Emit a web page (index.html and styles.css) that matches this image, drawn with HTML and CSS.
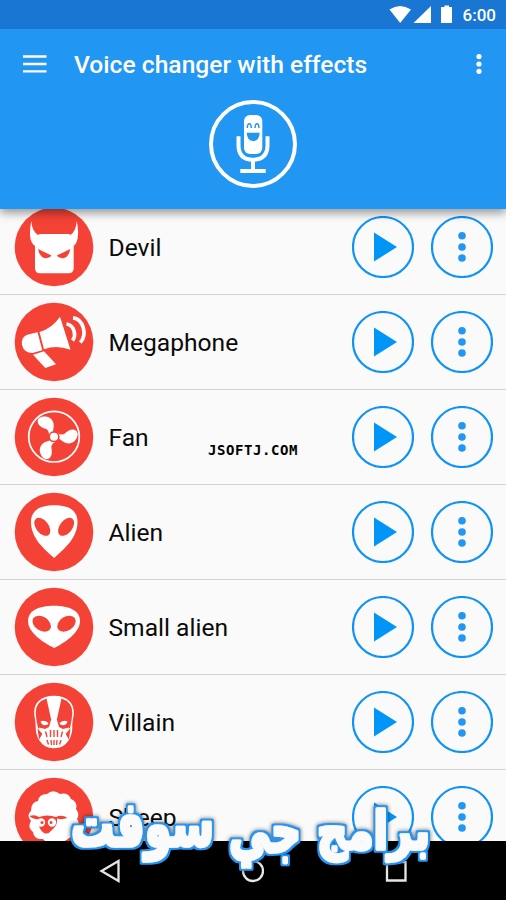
FILE: index.html
```html
<!DOCTYPE html>
<html lang="en">
<head>
<meta charset="utf-8">
<title>Voice changer with effects</title>
<link rel="stylesheet" href="styles.css">
</head>
<body>
<svg class="defs" width="0" height="0" aria-hidden="true">
  <symbol id="play" viewBox="0 0 62 62"><circle class="ring" cx="31" cy="31" r="30"/><path class="solid" d="M22 16.5L45 31L22 45.500Z"/></symbol>
  <symbol id="more" viewBox="0 0 62 62"><circle class="ring" cx="31" cy="31" r="30"/><circle class="dot" cx="31" cy="19.800" r="3.800"/><circle class="dot" cx="31" cy="31" r="3.800"/><circle class="dot" cx="31" cy="42" r="3.800"/></symbol>
  <symbol id="blade" viewBox="0 0 80 80"><path d="M35 38Q35 33 31.500 31.800C27 30.500 23.500 27.500 23.700 24C24 20 29 18.700 33 19.700C38 21 40 25 39.700 29.500C39.500 32 39 33 39 36Z"/></symbol>
</svg>
<div class="screen">
  <div class="status">
    <svg width="66" height="20" viewBox="0 0 66 20"><path d="M.5 4.500Q11 -2.500 22 4.500L11.200 18Z M42 1V18H24.500Z M52 2h3.500V.5h4.500V2h3V18H52Z"/></svg>
    <span class="clock">6:00</span>
  </div>
  <header class="header">
    <div class="toolbar">
      <svg class="burger" width="24" height="18" viewBox="0 0 24 18"><path d="M0 1.500h23.500M0 9h23.500M0 16.400h23.500"/></svg>
      <h1>Voice changer with effects</h1>
      <svg class="overflow" width="6" height="20" viewBox="0 0 6 20"><circle cx="3" cy="2.600" r="2.600"/><circle cx="3" cy="10" r="2.600"/><circle cx="3" cy="17.300" r="2.600"/></svg>
    </div>
    <svg class="mic" width="88" height="88" viewBox="0 0 88 88">
      <circle class="line" cx="44" cy="44" r="42"/>
      <rect x="35" y="15" width="18.300" height="39" rx="6"/>
      <path class="line" d="M29.500 36.300V45Q29.500 59.700 44 59.700Q58.500 59.700 58.500 45V36.300"/>
      <path class="line" d="M44 60V71M31.300 71H56.700"/>
      <path class="face" d="M38.300 28Q38.500 23.800 40.300 23.800Q42.100 23.800 42.300 28M46 28Q46.200 23.800 48 23.800Q49.800 23.800 50 28"/>
      <path class="mouth" d="M37.700 32.700H50.700Q50.200 41 44.200 41Q38.200 41 37.700 32.700Z"/>
    </svg>
  </header>
  <main class="list">
    <div class="row">
      <svg class="avatar" viewBox="0 0 80 80"><circle class="red" cx="40" cy="40" r="39.300"/><path d="M17.300 14Q18 24 24 28Q25 27 27 27H54Q56 27 56.500 28Q62 24 62.700 14Q64.500 21 64 28Q63.500 36 59.700 39V61Q59.700 66.300 54.500 66.300H26Q21 66.300 21 61V39Q16.500 36 16 28Q15.800 21 17.300 14Z"/><path class="red" d="M24 42L37.500 48.500Q35.500 51.300 31 51.300Q25.500 50 24 42ZM56.300 42L42.800 48.500Q45 51.300 49.500 51.300Q55 50 56.300 42Z"/></svg>
      <span class="name">Devil</span><svg class="btn"><use href="#play"/></svg><svg class="btn"><use href="#more"/></svg>
    </div>
    <div class="row">
      <svg class="avatar" viewBox="0 0 80 80"><circle class="red" cx="40" cy="40" r="39.300"/><path d="M23.500 30.300L28.300 48.300L18.500 51Q10 51 8 43Q6.500 35 14 32.600ZM25.500 30Q38 26.500 46 14.700L56.500 47.700Q42 42.500 30 47.300ZM19 52.700L30 49.300L42 62.300L31.300 66Z"/><path class="wave" d="M52.500 22C59.500 22.500 63 33 58.500 38.500M59 15.800C69.500 17 73.500 33 66.300 40.500"/></svg>
      <span class="name">Megaphone</span><svg class="btn"><use href="#play"/></svg><svg class="btn"><use href="#more"/></svg>
    </div>
    <div class="row">
      <svg class="avatar" viewBox="0 0 80 80"><circle class="red" cx="40" cy="40" r="39.300"/><circle class="fanring" cx="40" cy="39.700" r="25.300"/><use href="#blade" width="80" height="80"/><use href="#blade" width="80" height="80" transform="rotate(120 40 39.700)"/><use href="#blade" width="80" height="80" transform="rotate(240 40 39.700)"/><circle class="red" cx="40" cy="39.700" r="5.600"/><circle cx="40" cy="39.700" r="4"/></svg>
      <span class="name">Fan</span><svg class="btn"><use href="#play"/></svg><svg class="btn"><use href="#more"/></svg>
    </div>
    <div class="row">
      <svg class="avatar" viewBox="0 0 80 80"><circle class="red" cx="40" cy="40" r="39.300"/><path d="M40.200 13.300C55 13.300 63.500 18.500 63.500 30C63.500 46 50 57 40.200 66C30 57 17 46 17 30C17 18.500 26 13.300 40.200 13.300Z"/><ellipse class="red" cx="28.300" cy="34.800" rx="10.300" ry="6.300" transform="rotate(52 28.300 34.800)"/><ellipse class="red" cx="52.100" cy="34.800" rx="10.300" ry="6.300" transform="rotate(-52 52.100 34.800)"/></svg>
      <span class="name">Alien</span><svg class="btn"><use href="#play"/></svg><svg class="btn"><use href="#more"/></svg>
    </div>
    <div class="row">
      <svg class="avatar" viewBox="0 0 80 80"><circle class="red" cx="40" cy="40" r="39.300"/><path d="M40 18.700C55 18.700 66 23.500 66 34C66 46 50 56 40.200 61C30 56 14 46 14 34C14 23.500 25 18.700 40 18.700Z"/><ellipse class="red" cx="27.700" cy="36.700" rx="10" ry="7" transform="rotate(33 27.700 36.700)"/><ellipse class="red" cx="52.500" cy="36.700" rx="10" ry="7" transform="rotate(-33 52.500 36.700)"/></svg>
      <span class="name">Small alien</span><svg class="btn"><use href="#play"/></svg><svg class="btn"><use href="#more"/></svg>
    </div>
    <div class="row">
      <svg class="avatar" viewBox="0 0 80 80"><circle class="red" cx="40" cy="40" r="39.300"/><path d="M40 13.800C53 13.800 59.800 21 59.800 30C59.800 36 58 39 58.300 46C58 55 54 60 50.500 63Q46 66.300 40 66.300Q34 66.300 29.500 63C26 60 22 55 21.700 46C22 39 20.200 36 20.200 30C20.200 21 27 13.800 40 13.800Z"/><path class="red" d="M32.500 16.500Q21.500 20 21.700 31Q22 38 24 46Q28 49.500 33 48Q36 46 37.500 39ZM47.500 16.500Q58.500 20 58.300 31Q58 38 56 46Q52 49.500 47 48Q44 46 42.500 39Z"/><path d="M26.500 39.500Q30 37.500 34.500 41Q34 43.200 31 43.200Q27.500 43 26.500 39.500ZM53.500 39.500Q50 37.500 45.500 41Q46 43.200 49 43.200Q52.500 43 53.500 39.500ZM37 38H43L45 45L49 47L55 45.500L52 62H28L25 45.500L31 47L35 45Z"/><path class="slit" d="M24.500 48.500L27.500 52L25.500 55.500ZM55.500 48.500L52.500 52L54.500 55.500ZM31.500 49.500L33 55M36.500 48V55M40 48V55M43.500 48V55M48.500 49.500L47 55M33 58L34.500 62.500M37 58L37.500 63M40 58V63M43 58L42.500 63M47 58L45.500 62.500"/></svg>
      <span class="name">Villain</span><svg class="btn"><use href="#play"/></svg><svg class="btn"><use href="#more"/></svg>
    </div>
    <div class="row last">
      <svg class="avatar" viewBox="0 0 80 80"><circle class="red" cx="40" cy="40" r="39.300"/><path d="M24 24Q25 17 33 17Q39 11.500 46 17Q54 15 57 22Q64 25 62 32Q66 37 63 42Q67 48 62 53Q61 60 55 61Q50 66 42 65Q34 68 29 62Q20 63 19 55Q13 50 17 44Q12 38 17 34Q17 25 24 24Z"/><path class="red" d="M15.500 39Q21 37 25 40Q33 37 42 40Q48 37 53.500 41Q48 43 43 41.500Q44 48 38 53Q34 58 30 56Q24 52 24 42Q19 43 15.500 39Z"/><circle cx="27" cy="45.500" r="4.200"/><circle cx="38" cy="45.500" r="4.200"/><circle class="red" cx="28" cy="45.500" r="1.500"/><circle class="red" cx="37" cy="45.500" r="1.500"/></svg>
      <span class="name">Sheep</span><svg class="btn"><use href="#play"/></svg><svg class="btn"><use href="#more"/></svg>
    </div>
  </main>
  <nav class="nav">
    <svg width="22" height="24" viewBox="0 0 22 24"><path d="M19.500 2V22L2.500 12Z"/></svg>
    <svg width="22" height="24" viewBox="0 0 22 24"><circle cx="11" cy="12" r="10"/></svg>
    <svg width="22" height="24" viewBox="0 0 22 24"><path d="M2 3H20.500V21.500H2Z"/></svg>
  </nav>
  <div class="site">JSOFTJ.COM</div>
  <svg class="brand" width="380" height="90" viewBox="0 0 380 90" direction="rtl">
    <defs>
      <filter id="outline" x="-5%" y="-20%" width="110%" height="140%">
        <feMorphology in="SourceAlpha" operator="dilate" radius="2" result="wide"/>
        <feFlood flood-color="#2196f3"/>
        <feComposite in2="wide" operator="in" result="edge"/>
        <feMerge><feMergeNode in="edge"/><feMergeNode in="SourceGraphic"/></feMerge>
      </filter>
    </defs>
    <g filter="url(#outline)">
      <text x="368" y="47" textLength="113" lengthAdjust="spacingAndGlyphs">برامج</text>
      <text class="mid" x="239" y="50" textLength="72" lengthAdjust="spacingAndGlyphs">جي</text>
      <text class="end" x="152" y="44" textLength="143" lengthAdjust="spacingAndGlyphs">سوفت</text>
    </g>
  </svg>
</div>
</body>
</html>
```
FILE: styles.css
```css
body { margin: 0; background: #fafafa; font-family: Roboto, sans-serif; }
svg { fill: #fff; flex: none; display: block; }
.defs { position: absolute; }
.screen { position: relative; display: flex; flex-direction: column; width: 506px; height: 900px; overflow: hidden; background: #fafafa; }
.status { position: relative; z-index: 2; display: flex; align-items: center; justify-content: flex-end; gap: 8px; height: 29px; padding-right: 10px; box-sizing: border-box; background: #1976d2; color: #fff; flex: none; }
.status svg { margin-top: 1px; }
.clock { font-size: 17px; font-weight: 500; line-height: 29px; margin-top: 2px; }
.header { position: relative; z-index: 1; height: 180px; flex: none; background: #2196f3; box-shadow: 0 4px 9px rgba(0, 0, 0, .4); }
.toolbar { display: flex; align-items: center; height: 71px; padding: 0 24px 0 23px; }
.toolbar h1 { flex: 1; margin: 1px 0 0 27px; color: #fff; font-size: 24.650px; font-weight: 500; line-height: 30px; white-space: nowrap; }
.toolbar svg { margin-top: -2px; }
.burger path { stroke: #fff; stroke-width: 2.400; }
.mic { margin: 0 auto; }
.mic .line { fill: none; stroke: #fff; stroke-width: 4; }
.mic .face { fill: none; stroke: #2196f3; stroke-width: 1.500; }
.mic .mouth { fill: #2196f3; }
.list { flex: 1; min-height: 0; overflow: hidden; }
.row { display: flex; align-items: center; height: 95px; box-sizing: border-box; padding: 0 13px 0 14px; border-bottom: 1px solid #d3d3d3; }
.row:first-child { margin-top: -9px; }
.avatar { width: 80px; height: 80px; }
.name { flex: 1; margin: 2px 0 0 14.500px; font-size: 24.600px; line-height: 30px; color: #0a0a0a; }
.btn { width: 62px; height: 62px; margin-left: 17px; }
.ring { fill: none; stroke: #1193f5; stroke-width: 2.200; }
.solid { fill: #0295f8; }
.dot { fill: #2196f3; }
.red { fill: #f44336; }
.wave { fill: none; stroke: #fff; stroke-width: 3.700; }
.fanring { fill: none; stroke: #fff; stroke-width: 1.700; }
.slit { fill: #f44336; stroke: #f44336; stroke-width: 1.400; }
.nav { display: flex; justify-content: center; align-items: center; gap: 121px; height: 59px; flex: none; background: #000; }
.nav svg { fill: none; stroke: #e6e6e6; stroke-width: 2.300; }
.site { position: absolute; left: 208px; top: 441px; z-index: 2; font: bold 14px/18px "DejaVu Sans Mono", monospace; letter-spacing: .57px; color: #000; }
.brand { position: absolute; left: 62px; top: 802px; z-index: 3; overflow: visible; filter: drop-shadow(0 0 2px rgba(0, 0, 0, .6)); }
.brand text { font-family: "DejaVu Sans", sans-serif; font-weight: bold; font-size: 52px; fill: #fafafa; stroke: #fafafa; stroke-width: 3.600px; stroke-linejoin: round; }
.brand .mid { font-size: 61px; }
.brand .end { font-size: 62px; }
```
